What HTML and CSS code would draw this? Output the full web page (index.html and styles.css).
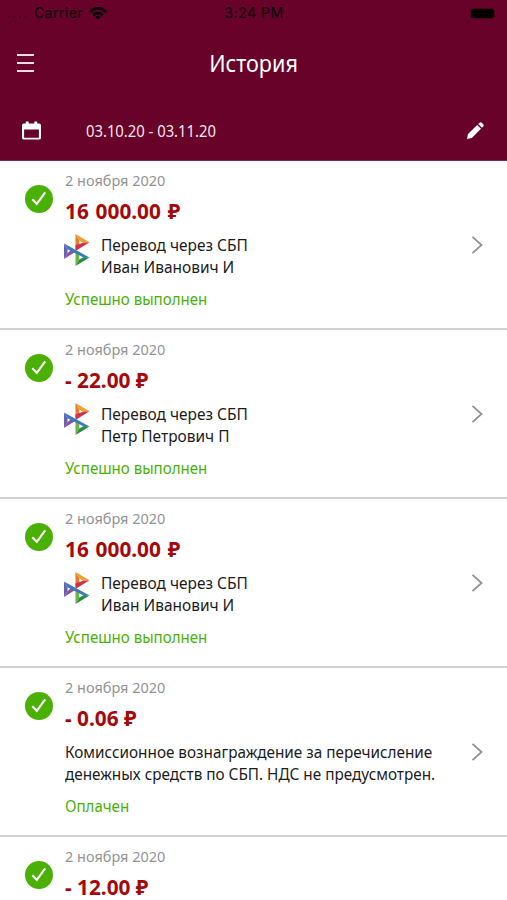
FILE: index.html
```html
<!DOCTYPE html>
<html lang="ru">
<head>
<meta charset="utf-8">
<title>История</title>
<link rel="stylesheet" href="styles.css">
</head>
<body>
<svg class="defs" width="0" height="0" aria-hidden="true">
  <symbol id="check" viewBox="0 0 28 28"><circle cx="14" cy="14" r="14" fill="#4bb004"/><path d="M7.300 14.300l4.500 4.500 8.400-11.500" fill="none" stroke="#fff" stroke-width="2.100"/></symbol>
  <symbol id="chevron" viewBox="0 0 12 20"><path d="M1.500 1.800L10.500 10l-9 8.200" fill="none" stroke="#929292" stroke-width="1.800"/></symbol>
  <symbol id="sbp" viewBox="0 0 26 32">
    <path d="M11.500 0v15l3.800-2.500V6.500z" fill="#e37b2d"/>
    <path d="M11.500 0L25.500 8.300l-6.500.4-3.700-2.200z" fill="#eea02a"/>
    <path d="M25.500 8.300L11.500 17v-5.500l7.500-2.800z" fill="#d2304c"/>
    <path d="M0 9.500v15.500l3.500-5.700v-4z" fill="#6861b2"/>
    <path d="M0 25l12-7.500-4.500-1.900-4 3.700z" fill="#8953a0"/>
    <path d="M11.500 32V17l3.800 3v5.500z" fill="#6cb23d"/>
    <path d="M11.500 32l14-8.500-5.500-.5-4.700 2.500z" fill="#278c45"/>
    <path d="M0 9.500l25.500 14h-5.800L3.500 15.300z" fill="#397cbd"/>
  </symbol>
</svg>
<main class="screen">
  <header class="header">
    <div class="status">
      <span class="signal"><i></i><i></i><i></i><i></i></span>
      <span class="carrier">Carrier</span>
      <svg class="wifi" viewBox="0 0 18 13"><g fill="none" stroke="#050003" stroke-width="2.800"><path d="M1 5Q9-2.500 17 5"/><path d="M4 8.300Q9 3.700 14 8.300"/></g><path d="M6.300 10Q9 7.700 11.700 10L9 12.800z" fill="#050003"/></svg>
      <span class="clock">3:24 PM</span>
      <span class="battery"></span>
    </div>
    <div class="titlebar">
      <span class="menu"><i></i><i></i><i></i></span>
      <h1 class="title">История</h1>
    </div>
    <div class="period">
      <svg class="calendar" viewBox="0 0 20 20"><path fill="#fff" fill-rule="evenodd" d="M2 2h2V0h3v2h6V0h3v2h2q2 0 2 2v13q0 2-2 2H2q-2 0-2-2V4q0-2 2-2zm.2 6.500v8.500h15.600V8.500z"/></svg>
      <span class="range">03.10.20 - 03.11.20</span>
      <svg class="pencil" viewBox="0 0 17 17"><path fill="#fff" d="M0 17l1-5L10.200 3l3.800 3.800L4.800 16zM11.200 2l1.300-1.300q1-1 2.200.1l1.500 1.500q1 1 0 2.100L15 5.800z"/></svg>
    </div>
  </header>
  <article class="row">
    <svg class="check"><use href="#check"/></svg>
    <div class="body">
      <div class="date">2 ноября 2020</div>
      <div class="amount">16 000.00 ₽</div>
      <div class="info"><svg class="sbp"><use href="#sbp"/></svg><p class="desc">Перевод через СБП<br>Иван Иванович И</p></div>
      <div class="state">Успешно выполнен</div>
    </div>
    <svg class="chevron"><use href="#chevron"/></svg>
  </article>
  <article class="row">
    <svg class="check"><use href="#check"/></svg>
    <div class="body">
      <div class="date">2 ноября 2020</div>
      <div class="amount debit">- 22.00 ₽</div>
      <div class="info"><svg class="sbp"><use href="#sbp"/></svg><p class="desc">Перевод через СБП<br>Петр Петрович П</p></div>
      <div class="state">Успешно выполнен</div>
    </div>
    <svg class="chevron"><use href="#chevron"/></svg>
  </article>
  <article class="row">
    <svg class="check"><use href="#check"/></svg>
    <div class="body">
      <div class="date">2 ноября 2020</div>
      <div class="amount">16 000.00 ₽</div>
      <div class="info"><svg class="sbp"><use href="#sbp"/></svg><p class="desc">Перевод через СБП<br>Иван Иванович И</p></div>
      <div class="state">Успешно выполнен</div>
    </div>
    <svg class="chevron"><use href="#chevron"/></svg>
  </article>
  <article class="row">
    <svg class="check"><use href="#check"/></svg>
    <div class="body">
      <div class="date">2 ноября 2020</div>
      <div class="amount debit">- 0.06 ₽</div>
      <div class="info"><p class="desc wide">Комиссионное вознаграждение за перечисление<br>денежных средств по СБП. НДС не предусмотрен.</p></div>
      <div class="state">Оплачен</div>
    </div>
    <svg class="chevron"><use href="#chevron"/></svg>
  </article>
  <article class="row last">
    <svg class="check"><use href="#check"/></svg>
    <div class="body">
      <div class="date">2 ноября 2020</div>
      <div class="amount debit">- 12.00 ₽</div>
    </div>
  </article>
</main>
</body>
</html>
```
FILE: styles.css
```css
* { box-sizing: border-box; margin: 0; padding: 0; }
body { background: #fff; font-family: "Noto Sans", "Open Sans", sans-serif; }
svg { display: block; flex: none; }
.defs { position: absolute; }
.screen { width: 507px; height: 900px; overflow: hidden; }

.header { height: 161px; background: #680229; color: #fff; border-bottom: 1px solid #7c2d4c; }
.status { height: 26px; display: grid; grid-template-columns: 26px 55px 143px 60px 1fr 26px 10px; align-items: center; font: 500 14px/26px Inter, sans-serif; color: #150009; }
.signal { display: flex; gap: 4px; padding: 8px 0 0 8px; }
.signal i { width: 2px; height: 2px; border-radius: 1px; background: #430019; }
.carrier { padding-left: 8px; letter-spacing: .35px; }
.wifi { width: 18px; height: 13px; margin-left: 8px; }
.clock { text-align: center; white-space: nowrap; letter-spacing: .5px; }
.battery { grid-column: 6; width: 23px; height: 9px; border-radius: 3px; background: #000; box-shadow: 0 0 0 1px #4a001d; }
.titlebar { height: 74px; display: grid; grid-template-columns: 34px 1fr 34px; align-items: center; }
.menu { display: flex; flex-direction: column; gap: 6px; padding-left: 17px; }
.menu i { width: 17px; height: 2px; background: #efd9e2; }
.title { font-size: 23px; font-weight: 400; line-height: 32px; text-align: center; transform: scaleX(.94); }
.period { height: 60px; display: flex; align-items: center; padding: 1px 22px 0; }
.calendar { width: 19px; height: 20px; }
.range { flex: 1; margin-left: 45px; font-size: 16px; color: #f7e6ed; transform: scaleX(.925); transform-origin: left; }
.pencil { width: 17px; height: 17px; margin-right: 1px; }

.row { height: 169px; border-bottom: 2px solid #d2d2d2; display: flex; align-items: center; padding: 0 24px 0 25px; }
.last { height: 63px; border: 0; }
.check { width: 28px; height: 28px; align-self: flex-start; margin-top: 24px; }
.body { flex: 1; align-self: flex-start; margin-left: 12px; padding-top: 8px; white-space: nowrap; }
.date { font-size: 15px; line-height: 22px; color: #939393; transform: scaleX(.965); transform-origin: left; }
.amount { margin-top: 7px; font-size: 22px; font-weight: 700; line-height: 24px; color: #a60808; word-spacing: 1.5px; transform: scaleX(.945); transform-origin: left; }
.debit { word-spacing: 0; }
.info { display: flex; height: 44px; margin-top: 12px; }
.sbp { width: 26px; height: 32px; margin: 0 11px 0 -1px; }
.desc { font-size: 16px; line-height: 22px; color: #1c1c1c; transform: scaleX(.966); transform-origin: left; }
.wide { transform: scaleX(.956); }
.state { margin-top: 10px; font-size: 16px; line-height: 22px; color: #4bb004; transform: scaleX(.94); transform-origin: left; }
.chevron { width: 12px; height: 20px; }
```
